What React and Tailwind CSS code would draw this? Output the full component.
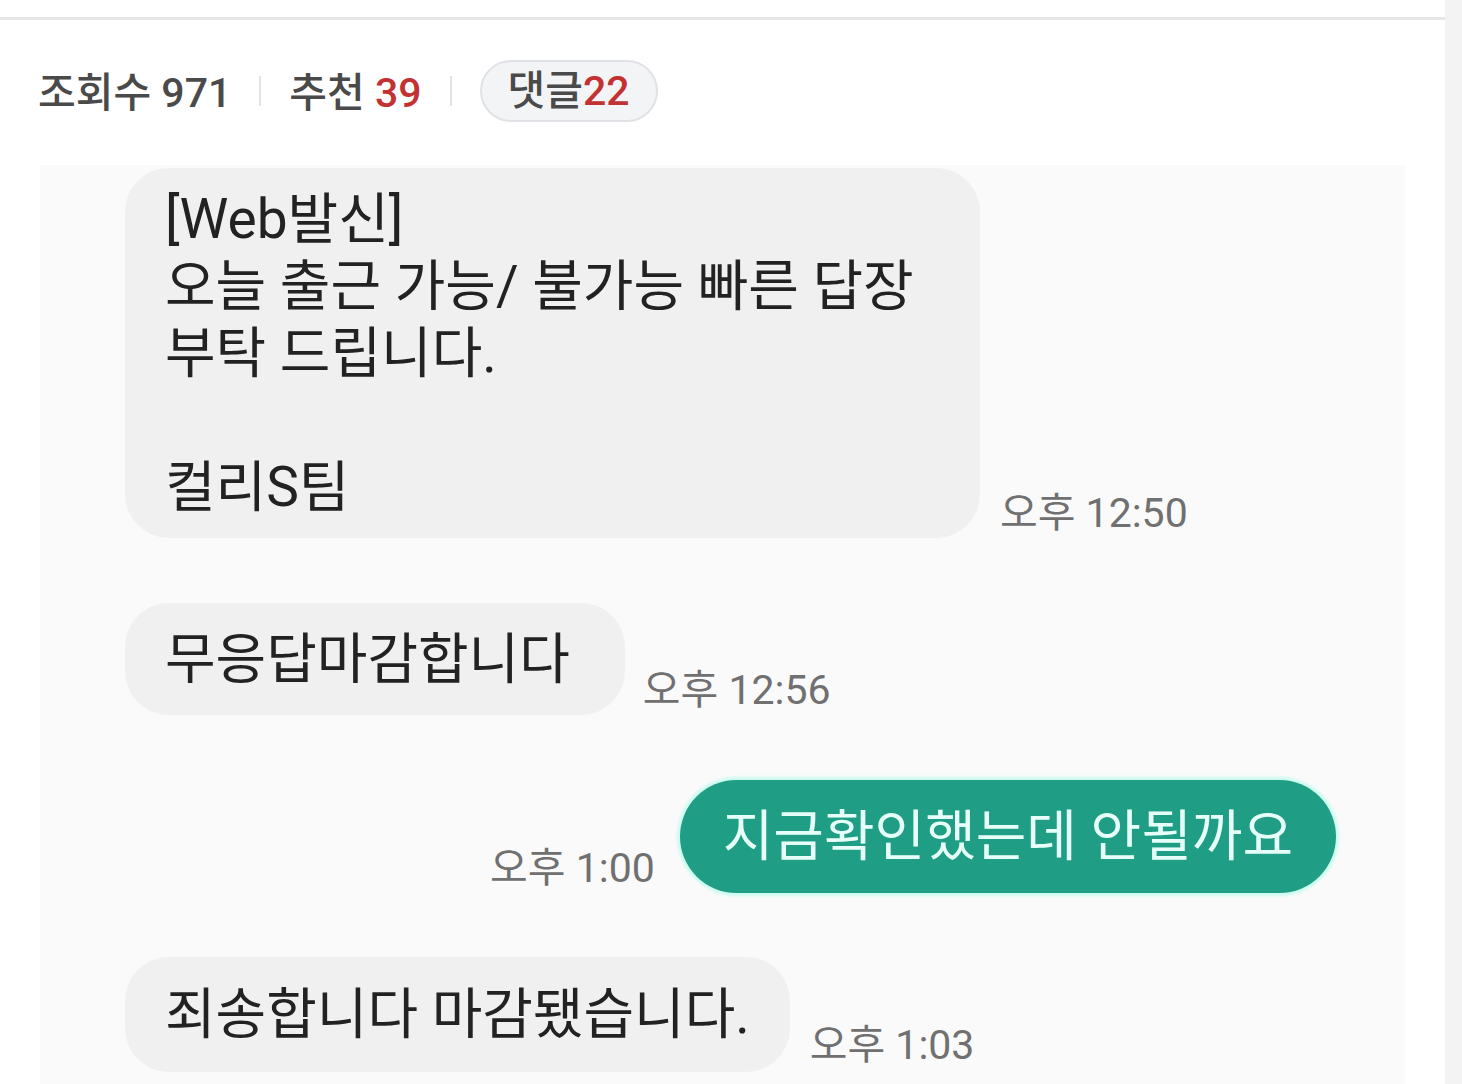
import React from 'react';

const font = "font-['Roboto','Noto_Sans_CJK_KR',sans-serif]";

function Stamp({ children }) {
  return (
    <span className="text-[41px] leading-[48px] text-[#707070] whitespace-nowrap">{children}</span>
  );
}

function Bubble({ children, className = '' }) {
  return (
    <div className={`rounded-[44px] bg-[#f0f0f0] text-[55px] text-[#222] ${className}`}>
      {children}
    </div>
  );
}

export default function App() {
  return (
    <div className={`flex h-[1084px] w-full overflow-hidden bg-white ${font}`}>
      <div className="flex w-[1445px] flex-col">
        <div className="h-[17px]" />
        <div className="h-[3px] bg-[#e4e6e8]" />

        {/* stats */}
        <div className="mt-[40px] flex h-[62px] items-center pl-[38px] text-[41px] leading-[48px] font-medium text-[#4a4a4a]">
          <span className="pt-[4px]">
            조회수 <span>971</span>
          </span>
          <span className="mx-[28px] h-[30px] w-[2px] bg-[#e2e2e2]" />
          <span className="pt-[4px]">
            추천 <span className="text-[#c23232]">39</span>
          </span>
          <span className="mx-[28px] h-[30px] w-[2px] bg-[#e2e2e2]" />
          <span className="flex h-[62px] items-center rounded-full border-2 border-[#e0e2e6] bg-[#f3f4f6] px-[26px]">
            댓글<span className="text-[#c23232]">22</span>
          </span>
        </div>

        {/* chat screenshot */}
        <div className="mt-[43px] ml-[40px] flex w-[1365px] flex-1 flex-col bg-[#fafafa] pt-[3px] pl-[85px] pr-[69px]">
          <div className="flex items-end gap-[20px]">
            <Bubble className="w-[855px] pt-[18px] pb-[17px] pl-[40px] leading-[67px]">
              <p>[Web발신]</p>
              <p>오늘 출근 가능/ 불가능 빠른 답장</p>
              <p>부탁 드립니다.</p>
              <p>&nbsp;</p>
              <p>컬리S팀</p>
            </Bubble>
            <div className="mb-[1px]">
              <Stamp>오후 12:50</Stamp>
            </div>
          </div>

          <div className="mt-[65px] flex items-end gap-[18px]">
            <Bubble className="flex h-[112px] items-center pl-[40px] pr-[55px]">무응답마감합니다</Bubble>
            <div className="mb-[1px]">
              <Stamp>오후 12:56</Stamp>
            </div>
          </div>

          <div className="mt-[65px] flex items-end justify-end gap-[25px]">
            <div className="mb-[1px]">
              <Stamp>오후 1:00</Stamp>
            </div>
            <div className="flex h-[113px] items-center rounded-full bg-[#1f9d85] px-[43px] text-[55px] text-[#e6fff8] shadow-[0_0_3px_3px_#c9fbef]">
              지금확인했는데 안될까요
            </div>
          </div>

          <div className="mt-[64px] flex items-end gap-[20px]">
            <Bubble className="flex h-[115px] items-center pl-[40px] pr-[40px]">죄송합니다 마감됐습니다.</Bubble>
            <div className="mb-[3px]">
              <Stamp>오후 1:03</Stamp>
            </div>
          </div>
        </div>
      </div>
      <div className="flex-1 bg-[#f3f3f3]" />
    </div>
  );
}
